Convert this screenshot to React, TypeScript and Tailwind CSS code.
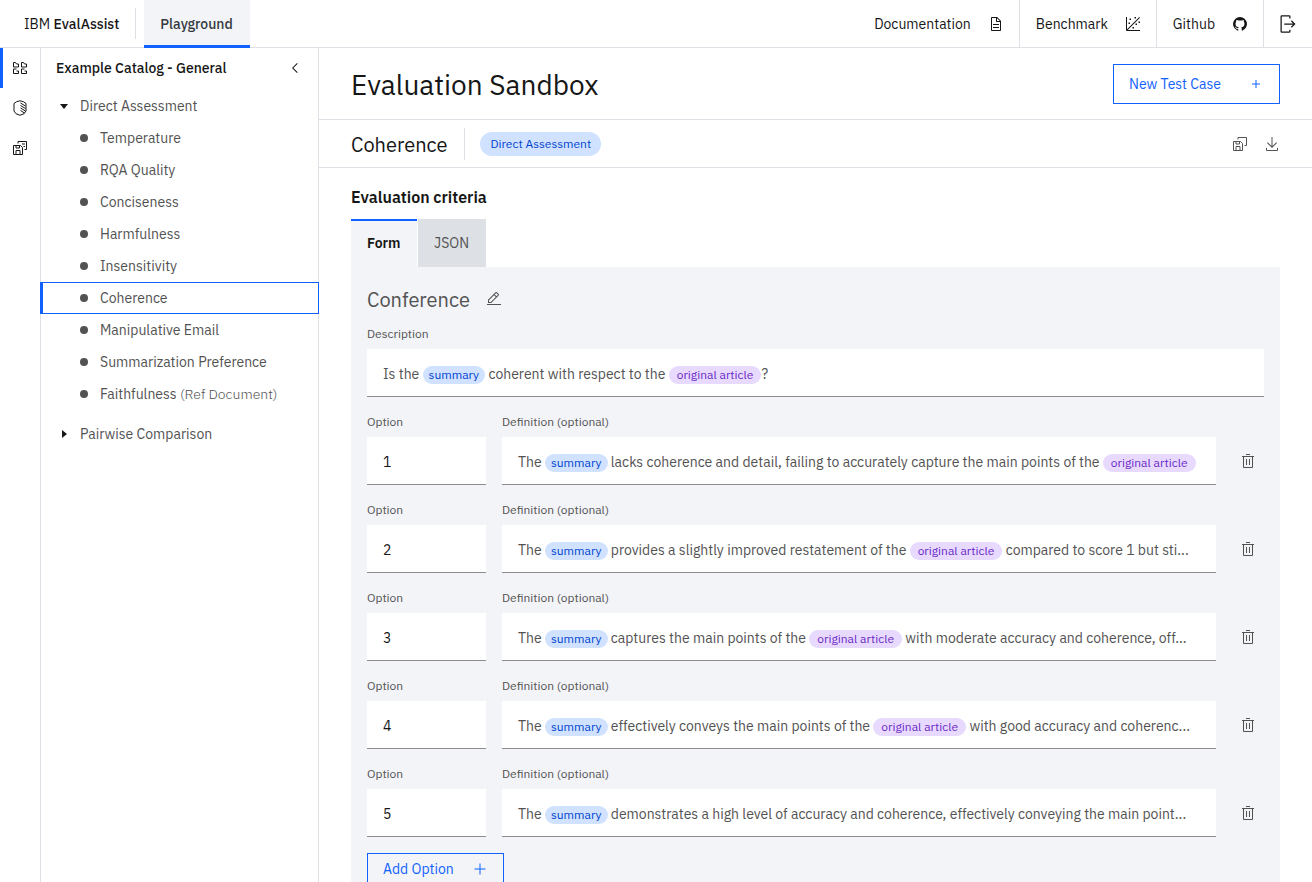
import React from "react";

const SUMMARY = "summary";
const ARTICLE = "original article";

const examples: { name: string; note?: string }[] = [
  { name: "Temperature" },
  { name: "RQA Quality" },
  { name: "Conciseness" },
  { name: "Harmfulness" },
  { name: "Insensitivity" },
  { name: "Coherence" },
  { name: "Manipulative Email" },
  { name: "Summarization Preference" },
  { name: "Faithfulness", note: "(Ref Document)" },
];

const options: string[][] = [
  ["The ", SUMMARY, " lacks coherence and detail, failing to accurately capture the main points of the ", ARTICLE],
  ["The ", SUMMARY, " provides a slightly improved restatement of the ", ARTICLE, " compared to score 1 but sti..."],
  ["The ", SUMMARY, " captures the main points of the ", ARTICLE, " with moderate accuracy and coherence, off..."],
  ["The ", SUMMARY, " effectively conveys the main points of the ", ARTICLE, " with good accuracy and coherenc..."],
  ["The ", SUMMARY, " demonstrates a high level of accuracy and coherence, effectively conveying the main point..."],
];

function Icon({ d, className = "size-4" }: { d: string; className?: string }) {
  return (
    <svg viewBox="0 0 32 32" fill="currentColor" aria-hidden="true" className={`shrink-0 ${className}`}>
      <path fillRule="evenodd" d={d} />
    </svg>
  );
}

function LineIcon({ d }: { d: string }) {
  return (
    <svg viewBox="0 0 32 32" fill="none" stroke="currentColor" strokeWidth="2" aria-hidden="true" className="size-4 shrink-0">
      <path d={d} />
    </svg>
  );
}

const icons = {
  document:
    "M25.7 9.3l-7-7C18.5 2.1 18.3 2 18 2H8C6.9 2 6 2.9 6 4v24c0 1.1.9 2 2 2h16c1.1 0 2-.9 2-2V10c0-.3-.1-.5-.3-.7zM18 4.4l5.6 5.6H18V4.4zM24 28H8V4h8v6c0 1.1.9 2 2 2h6v16zM10 22h12v2H10zM10 16h12v2H10z",
  benchmark:
    "M4 2H2v26a2 2 0 0 0 2 2h26v-2H5.4L30 3.4 28.6 2 4 26.6zM9 5h3v3H9zM19 2h3v3h-3zM7 13h3v3H7zM27 11h3v3h-3zM21 15h3v3h-3zM15 22h3v3h-3z",
  github:
    "M16 2a14 14 0 0 0-4.43 27.28c.7.13 1-.3 1-.67s0-1.21 0-2.38c-3.89.84-4.71-1.88-4.71-1.88A3.71 3.71 0 0 0 6.24 22.3c-1.27-.86.1-.85.1-.85A2.94 2.94 0 0 1 8.48 22.9a3 3 0 0 0 4.08 1.16 2.93 2.93 0 0 1 .88-1.87c-3.1-.36-6.37-1.56-6.37-6.92a5.4 5.4 0 0 1 1.44-3.76 5 5 0 0 1 .14-3.7s1.17-.38 3.85 1.43a13.3 13.3 0 0 1 7 0c2.67-1.81 3.84-1.43 3.84-1.43a5 5 0 0 1 .14 3.7 5.4 5.4 0 0 1 1.44 3.76c0 5.38-3.27 6.56-6.39 6.91a3.33 3.33 0 0 1 .95 2.59c0 1.87 0 3.38 0 3.84s.25.81 1 .67A14 14 0 0 0 16 2z",
  logout:
    "M6 30h12a2 2 0 0 0 2-2v-3h-2v3H6V4h12v3h2V4a2 2 0 0 0-2-2H6a2 2 0 0 0-2 2v24a2 2 0 0 0 2 2zM20.586 20.586 24.172 17H10v-2h14.172l-3.586-3.586L22 10l6 6-6 6z",
  chevron: "M10 16 20 6l1.4 1.4-8.6 8.6 8.6 8.6L20 26z",
  add: "M17 15V8h-2v7H8v2h7v7h2v-7h7v-2z",
  addLarge: "M17 15V5h-2v10H5v2h10v10h2V17h10v-2z",
  edit: "M2 26h28v2H2zM25.4 9c.8-.8.8-2 0-2.8l-3.6-3.6c-.8-.8-2-.8-2.8 0l-15 15V24h6.4zM20.4 4 24 7.6l-3 3L17.4 7zM6 22v-3.6l10-10 3.6 3.6-10 10z",
  trash: "M12 12h2v12h-2zM18 12h2v12h-2zM4 6v2h2v20a2 2 0 0 0 2 2h16a2 2 0 0 0 2-2V8h2V6zM8 28V8h16v20zM12 2h8v2h-8z",
  download:
    "M26 24v4H6v-4H4v4a2 2 0 0 0 2 2h20a2 2 0 0 0 2-2v-4zM26 14l-1.41-1.41L17 20.17V2h-2v18.17l-7.59-7.58L6 14l10 10z",
};

const lineIcons = {
  catalog:
    "M3 14V5h4l2 3h4v6zM19 14V5h4l2 3h4v6zM9 18H3v9h10v-5H9M25 18h-6v9h10v-5h-4",
  shield:
    "M16 1.5 9 3.5 4 7v15l4 5.5 8 3 8-3 4-5.500V7l-5-3.500zM17 6l10 6M17 11l10 6M17 16l10 6M17 21l8 5",
  saveAs: "M3 11h14l4 4v14H3zM8 29v-8h8v8M8 11v5h7v-5M12 7V3h17v16h-4",
  saved: "M3 11h14l4 4v14H3zM8 29v-8h8v8M8 11v5h7v-5M12 7V3h17v16h-4M20 8h6M23 13h3",
};

function Pill({ kind }: { kind: string }) {
  return kind === SUMMARY ? (
    <span className="inline-block rounded-full bg-[#d0e2ff] px-1.5 text-xs leading-[18px] text-[#0043ce]">{kind}</span>
  ) : (
    <span className="inline-block rounded-full bg-[#e8daff] px-2 text-xs leading-[18px] text-[#6929c4]">{kind}</span>
  );
}

function RichText({ parts }: { parts: string[] }) {
  return (
    <div className="h-12 overflow-hidden border-b border-[#8d8d8d] bg-white pl-4 text-sm leading-[50px] whitespace-nowrap text-[#525252]">
      {parts.map((part, i) =>
        part === SUMMARY || part === ARTICLE ? <Pill key={i} kind={part} /> : <React.Fragment key={i}>{part}</React.Fragment>,
      )}
    </div>
  );
}

function HeaderLink({ label, icon }: { label: string; icon: string }) {
  return (
    <a href="#" className="flex items-center gap-[17px] border-r border-[#dde1e6] pr-[15px] pl-4 text-sm">
      {label}
      <Icon d={icon} />
    </a>
  );
}

export default function App() {
  return (
    <div className="flex h-screen flex-col overflow-hidden bg-white font-['IBM_Plex_Sans','Inter',sans-serif] text-[#161616]">
      <header className="flex h-12 shrink-0 items-stretch border-b border-[#dde1e6]">
        <div className="my-2 flex items-center border-r border-[#dde1e6] pr-4 pl-6 text-sm">
          <span>
            IBM <span className="font-medium">EvalAssist</span>
          </span>
        </div>
        <a
          href="#"
          className="-mb-px ml-2 flex min-w-[106px] items-center border-b-3 border-[#0f62fe] bg-[#f2f4f8] px-4 pt-0.5 text-sm font-medium text-[#343a3f]"
        >
          Playground
        </a>
        <nav className="ml-auto flex">
          <HeaderLink label="Documentation" icon={icons.document} />
          <HeaderLink label="Benchmark" icon={icons.benchmark} />
          <HeaderLink label="Github" icon={icons.github} />
        </nav>
        <button aria-label="Log out" className="px-3.5">
          <Icon d={icons.logout} className="size-5" />
        </button>
      </header>

      <div className="flex min-h-0 flex-1">
        <nav className="flex w-10 shrink-0 flex-col">
          <button aria-label="Catalog" className="flex h-10 items-center border-l-3 border-[#0f62fe] pl-[9px]">
            <LineIcon d={lineIcons.catalog} />
          </button>
          <button aria-label="Risks" className="flex h-10 items-center pl-3">
            <LineIcon d={lineIcons.shield} />
          </button>
          <button aria-label="Saved test cases" className="flex h-10 items-center pl-3">
            <LineIcon d={lineIcons.saved} />
          </button>
        </nav>

        <aside className="w-[279px] shrink-0 border-x border-[#dde1e6] text-sm text-[#525252]">
          <div className="flex h-10 items-center justify-between px-[15px]">
            <h2 className="font-medium text-[#161616]">Example Catalog - General</h2>
            <button aria-label="Collapse catalog" className="text-[#161616]">
              <Icon d={icons.chevron} />
            </button>
          </div>
          <button className="mt-0.5 flex h-8 w-full items-center gap-3 pl-[19px]">
            <svg viewBox="0 0 8 8" className="size-2 text-[#161616]" aria-hidden="true">
              <path d="M0 2h8L4 7z" fill="currentColor" />
            </svg>
            Direct Assessment
          </button>
          <ul>
            {examples.map(({ name, note }) => (
              <li key={name} className={name === "Coherence" ? "-mx-px border border-l-3 border-[#0f62fe]" : ""}>
                <a
                  href="#"
                  className={
                    name === "Coherence" ? "flex h-[30px] items-center gap-3 pl-[37px]" : "flex h-8 items-center gap-3 pl-[39px]"
                  }
                >
                  <span className="size-2 rounded-full bg-[#525252]" />
                  <span>
                    {name} {note && <span className="font-light">{note}</span>}
                  </span>
                </a>
              </li>
            ))}
          </ul>
          <button className="mt-2 flex h-8 w-full items-center gap-3 pl-[19px]">
            <svg viewBox="0 0 8 8" className="size-2 text-[#161616]" aria-hidden="true">
              <path d="M2 0v8l5-4z" fill="currentColor" />
            </svg>
            Pairwise Comparison
          </button>
        </aside>

        <main className="min-w-0 flex-1">
          <div className="flex h-[72px] items-center justify-between border-b border-[#dde1e6] px-8">
            <h1 className="pt-0.5 text-[28px]">Evaluation Sandbox</h1>
            <button className="flex h-10 min-w-[167px] items-center justify-between gap-6 border border-[#0f62fe] px-[15px] text-sm text-[#0f62fe]">
              New Test Case
              <Icon d={icons.add} />
            </button>
          </div>
          <div className="flex h-12 items-center border-b border-[#dde1e6] px-8">
            <h2 className="h-8 border-r border-[#dde1e6] pr-[17px] text-xl leading-[34px]">Coherence</h2>
            <span className="ml-[15px] rounded-full bg-[#d0e2ff] px-2.5 py-1 text-xs text-[#0043ce]">Direct Assessment</span>
            <div className="ml-auto flex gap-4 text-[#525252]">
              <button aria-label="Save as">
                <LineIcon d={lineIcons.saveAs} />
              </button>
              <button aria-label="Download">
                <Icon d={icons.download} />
              </button>
            </div>
          </div>

          <section className="px-8 pt-[19px]">
            <h3 className="text-base leading-5 font-semibold">Evaluation criteria</h3>
            <div role="tablist" className="mt-3 flex h-12 gap-px text-sm">
              <button
                role="tab"
                aria-selected="true"
                className="min-w-[66px] border-t-2 border-[#0f62fe] bg-[#f2f4f8] px-4 pb-0.5 text-left font-semibold"
              >
                Form
              </button>
              <button role="tab" aria-selected="false" className="min-w-[68px] bg-[#dde1e6] px-4 text-left text-[#525252]">
                JSON
              </button>
            </div>
            <div className="bg-[#f2f4f8] px-4 pt-[19px] pb-8 text-[#525252]">
              <div className="flex items-center gap-4">
                <h4 className="text-xl">Conference</h4>
                <button aria-label="Rename criteria" className="pb-0.5">
                  <Icon d={icons.edit} />
                </button>
              </div>
              <div className="mt-[11px] pb-4">
                <p className="mb-1.5 text-xs leading-[18px]">Description</p>
                <RichText parts={["Is the ", SUMMARY, " coherent with respect to the ", ARTICLE, "?"]} />
              </div>
              {options.map((parts, i) => (
                <div key={i} className="grid grid-cols-[119px_minmax(0,1fr)_32px] gap-x-4 pb-4">
                  <label htmlFor={`option-${i}`} className="mb-1.5 text-xs leading-[18px]">
                    Option
                  </label>
                  <p className="col-span-2 text-xs leading-[18px]">Definition (optional)</p>
                  <input
                    id={`option-${i}`}
                    defaultValue={i + 1}
                    className="h-12 w-full min-w-0 border-b border-[#8d8d8d] bg-white px-4 pt-0.5 text-sm text-[#161616]"
                  />
                  <RichText parts={parts} />
                  <button aria-label={`Delete option ${i + 1}`} className="flex items-center justify-center">
                    <Icon d={icons.trash} />
                  </button>
                </div>
              ))}
              <button className="flex h-8 min-w-[137px] items-center justify-between border border-[#0f62fe] px-[15px] text-sm text-[#0f62fe]">
                Add Option
                <Icon d={icons.addLarge} />
              </button>
            </div>
          </section>
        </main>
      </div>
    </div>
  );
}
